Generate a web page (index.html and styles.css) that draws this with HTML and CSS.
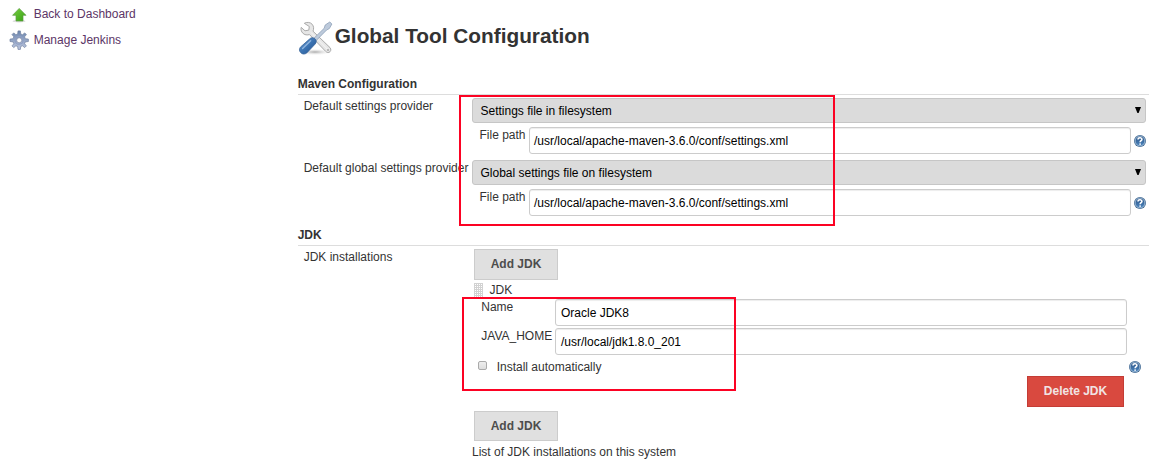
FILE: index.html
```html
<!DOCTYPE html>
<html lang="en">
<head>
<meta charset="utf-8">
<title>Global Tool Configuration</title>
<link rel="stylesheet" href="styles.css">
</head>
<body>
<svg class="defs" width="0" height="0" aria-hidden="true">
  <defs>
    <linearGradient id="helpFill" x1="0" y1="0" x2="0" y2="1"><stop offset="0" stop-color="#2c5384"/><stop offset="1" stop-color="#4c86c0"/></linearGradient>
    <symbol id="help" viewBox="0 0 12 12">
      <circle cx="6" cy="6" r="6" fill="#3f668f"/>
      <circle cx="6" cy="6" r="4.9" fill="url(#helpFill)" stroke="#a4bfd9" stroke-width=".9"/>
      <path d="M4 4.5C4.1 2.2 8.1 2.3 7.9 4.5 7.8 5.8 6.2 5.7 6.1 7.3" fill="none" stroke="#fff" stroke-width="1.6"/>
      <circle cx="6.1" cy="9.1" r=".9" fill="#fff"/>
    </symbol>
  </defs>
</svg>
<div class="page">
  <nav class="sidebar">
    <a class="task" href="#">
      <svg class="task-icon" viewBox="0 0 20 20">
        <defs><linearGradient id="arrow" x1="0" y1="0" x2="1" y2="1"><stop offset="0" stop-color="#79cf42"/><stop offset="1" stop-color="#36a113"/></linearGradient></defs>
        <ellipse cx="10" cy="17.2" rx="6.5" ry="1.3" fill="#ddd"/>
        <path d="M10.2 4.4 17 11.3H14V17H7V11.3H3.6Z" fill="url(#arrow)" stroke="#5b9c42" stroke-width=".7" stroke-linejoin="round"/>
      </svg>
      <span>Back to Dashboard</span>
    </a>
    <a class="task" href="#">
      <svg class="task-icon" viewBox="0 0 20 20">
        <defs><linearGradient id="gear" x1="0" y1="0" x2="0" y2="1"><stop offset="0" stop-color="#6c86ad"/><stop offset="1" stop-color="#bcc6df"/></linearGradient></defs>
        <path d="M8.7 4 9 .9H11.4L11.7 4 13.5 4.7 15.7 2.9 17.4 4.6 15.6 6.8 16.3 8.7 19.4 9.1V11.5L16.3 11.9 15.6 13.7 17.4 15.9 15.7 17.6 13.5 15.8 11.7 16.5 11.4 19.4H9L8.7 16.5 6.9 15.8 4.7 17.6 3 15.9 4.8 13.7 4.1 11.9 1 11.5V9.1L4.1 8.7 4.8 6.8 3 4.6 4.7 2.9 6.9 4.7Z" fill="url(#gear)" stroke="#7182a2" stroke-width=".7"/>
        <circle cx="10.2" cy="10.3" r="4" fill="none" stroke="#8f9fc5" stroke-width="1"/>
        <circle cx="10.2" cy="10.3" r="2.5" fill="#fff" stroke="#73809c" stroke-width=".6"/>
      </svg>
      <span>Manage Jenkins</span>
    </a>
  </nav>
  <main class="main">
    <h1 class="title">
      <svg class="title-icon" viewBox="0 0 36 36">
        <defs><linearGradient id="handle" x1="0" y1="0" x2="1" y2="1"><stop offset="0" stop-color="#6f9fd2"/><stop offset=".5" stop-color="#3b73b2"/><stop offset="1" stop-color="#23518b"/></linearGradient>
        <radialGradient id="shade"><stop offset="0" stop-color="#aaa"/><stop offset="1" stop-color="#fff" stop-opacity="0"/></radialGradient></defs>
        <ellipse cx="17" cy="32" rx="18" ry="3.5" fill="url(#shade)"/>
        <path d="M6.3 3.3C8.6 1.9 12.3 2 14.2 4.3 15.8 6.3 16 8.7 15 11.2L32 27.6C33.5 29.3 32.9 31.6 31 32.4 29.8 32.8 28.5 32.3 27.6 31.3L11.5 14.6C8.2 15.6 5.3 14.5 3.8 11.9 3 10.4 2.8 9 3.2 7.4L7 10.8 10.8 10.1 11.3 6.5Z" fill="#e6e6e6" stroke="#a2a2a2" stroke-width=".9"/>
        <path d="M13 12.4 29.8 29.5" stroke="#f6f6f6" stroke-width="1"/>
        <circle cx="30" cy="30" r="1" fill="#aaa"/>
        <path d="M15.5 18.7 26.2 8.3 27.2 5 31.8 2 33.9 4 31.3 8.6 28.6 10 17.8 20.9Z" fill="#bdcadb" stroke="#8d9fb7" stroke-width=".8"/>
        <path d="M11.5 19.1C13 17.4 15 17.2 16.9 18.7 18.7 20.3 18.6 22.3 17.2 24L8.8 32.9C6.8 34.6 4.3 34.3 2.8 32.7 1.1 31 1 28.8 2.5 27Z" fill="url(#handle)" stroke="#3a669c" stroke-width=".8"/>
        <path d="M12.6 20.7 4.6 28.5" stroke="#8db3de" stroke-width="1.5" stroke-linecap="round"/>
      </svg>
      <span>Global Tool Configuration</span>
    </h1>

    <h2 class="section">Maven Configuration</h2>
    <div class="maven">
      <div class="setting">
        <label class="name">Default settings provider</label>
        <div class="control">
          <div class="select"><span>Settings file in filesystem</span><svg class="caret" viewBox="0 0 6 6"><path d="M0 0H6L3.6 6H2.4Z"/></svg></div>
          <div class="path"><label>File path</label><div class="input">/usr/local/apache-maven-3.6.0/conf/settings.xml</div><svg class="help"><use href="#help"/></svg></div>
        </div>
      </div>
      <div class="setting">
        <label class="name">Default global settings provider</label>
        <div class="control">
          <div class="select"><span>Global settings file on filesystem</span><svg class="caret" viewBox="0 0 6 6"><path d="M0 0H6L3.6 6H2.4Z"/></svg></div>
          <div class="path"><label>File path</label><div class="input">/usr/local/apache-maven-3.6.0/conf/settings.xml</div><svg class="help"><use href="#help"/></svg></div>
        </div>
      </div>
      <div class="mark mark-maven"></div>
    </div>

    <h2 class="section section-jdk">JDK</h2>
    <div class="setting jdk">
      <label class="name">JDK installations</label>
      <div class="control">
        <button class="button">Add JDK</button>
        <div class="drag"><span class="grip"></span><span>JDK</span></div>
        <div class="installation">
          <div class="field"><label>Name</label><div class="input">Oracle JDK8</div></div>
          <div class="field"><label>JAVA_HOME</label><div class="input">/usr/local/jdk1.8.0_201</div></div>
          <div class="auto"><span class="checkbox"></span><label>Install automatically</label><svg class="help"><use href="#help"/></svg></div>
          <div class="mark mark-jdk"></div>
        </div>
        <button class="button danger">Delete JDK</button>
        <button class="button add-last">Add JDK</button>
        <div class="note">List of JDK installations on this system</div>
      </div>
    </div>
  </main>
</div>
</body>
</html>
```
FILE: styles.css
```css
* { box-sizing: border-box; }
body {
  margin: 0;
  background: #fff;
  color: #333;
  font: 12px/16px "Liberation Sans", Arial, sans-serif;
  overflow: hidden;
}
svg { display: block; flex: none; }
.defs { position: absolute; }
.page { display: grid; grid-template-columns: 297.7px 851.3px; height: 465px; }

.sidebar { padding: 4px 0 0 9px; }
.task {
  display: flex;
  gap: 4.7px;
  height: 26px;
  color: #5c3566;
  text-decoration: none;
}
.task span { padding-top: 2px; }
.task-icon { width: 20px; height: 20px; }

.title {
  display: flex;
  align-items: center;
  gap: 1px;
  height: 36px;
  margin: 20px 0 0;
  font-size: 20.8px;
  line-height: 24px;
}
.title-icon { width: 36px; height: 36px; }
.title span { padding-bottom: 4px; }

.section {
  height: 19px;
  margin: 20px 0 0;
  border-bottom: 1px solid #ddd;
  font-size: 12px;
  line-height: 16px;
}
.section-jdk { margin-top: 5px; }

.maven { position: relative; padding-top: 3px; }
.setting {
  display: grid;
  grid-template-columns: 168.3px 674px;
  padding-left: 6px;
  height: 62px;
}
.name { white-space: nowrap; }
.select {
  display: flex;
  align-items: center;
  justify-content: space-between;
  height: 25px;
  padding: 0 4px 0 7.5px;
  border: 1px solid #c6c6c6;
  border-radius: 3px;
  background: #dbdbdb;
  color: #000;
}
.caret { width: 6px; height: 6px; margin-bottom: 2px; }
.path {
  display: grid;
  grid-template-columns: 49.5px 602px 12px;
  margin: 4px 0 0 7.5px;
}
.path .help { margin: 8px 0 0 3px; }
.input {
  height: 27px;
  padding: 0 5px;
  border: 1px solid #ccc;
  border-radius: 3px;
  background: #fff;
  box-shadow: inset 0 1px 1px rgba(0, 0, 0, .075);
  color: #000;
  line-height: 26px;
}
.path .input { padding-left: 4px; }
.help { width: 12px; height: 12px; }

.jdk { padding-top: 3px; height: auto; }
.control { display: flex; flex-direction: column; }
.button {
  width: 84px;
  height: 31px;
  margin: 0 0 0 2px;
  padding: 0 0 2px;
  border: 1px solid #ccc;
  background: #e0e0e0;
  color: #4d4d4d;
  font: bold 12px/16px "Liberation Sans", Arial, sans-serif;
}
.drag { display: flex; gap: 6.5px; height: 19px; padding: 2px 0 0 2px; }
.grip {
  width: 9px;
  height: 14px;
  margin-top: 1px;
  background: conic-gradient(from 90deg at 1px 1px, transparent 90deg, #d2d2d2 0) 0 0 / 2px 2px;
}
.installation { position: relative; }
.field {
  display: grid;
  grid-template-columns: 73.7px 572px;
  margin: 0 0 2px 9.3px;
}
.auto { display: flex; height: 19px; padding: 4px 0 0 6px; }
.auto label { margin: -2px 0 0 9.7px; width: 632.3px; }
.checkbox {
  width: 9px;
  height: 9px;
  border: 1px solid #aaa;
  border-radius: 2px;
  background: linear-gradient(#eee, #ddd);
}
.danger {
  width: 97px;
  margin: 0 0 0 555px;
  border-color: #c43c35;
  background: #d9493f;
  color: #f1e4e4;
}
.add-last { height: 30px; margin-top: 4px; padding-bottom: 0; }
.note { margin-top: 3px; }

/* Highlight frames drawn over the form */
.mark { position: absolute; border: 2px solid #fc0223; pointer-events: none; }
.mark-maven { left: 161.3px; top: 0; width: 376px; height: 131px; }
.mark-jdk { left: -10px; top: -2px; width: 274px; height: 94px; }
```
